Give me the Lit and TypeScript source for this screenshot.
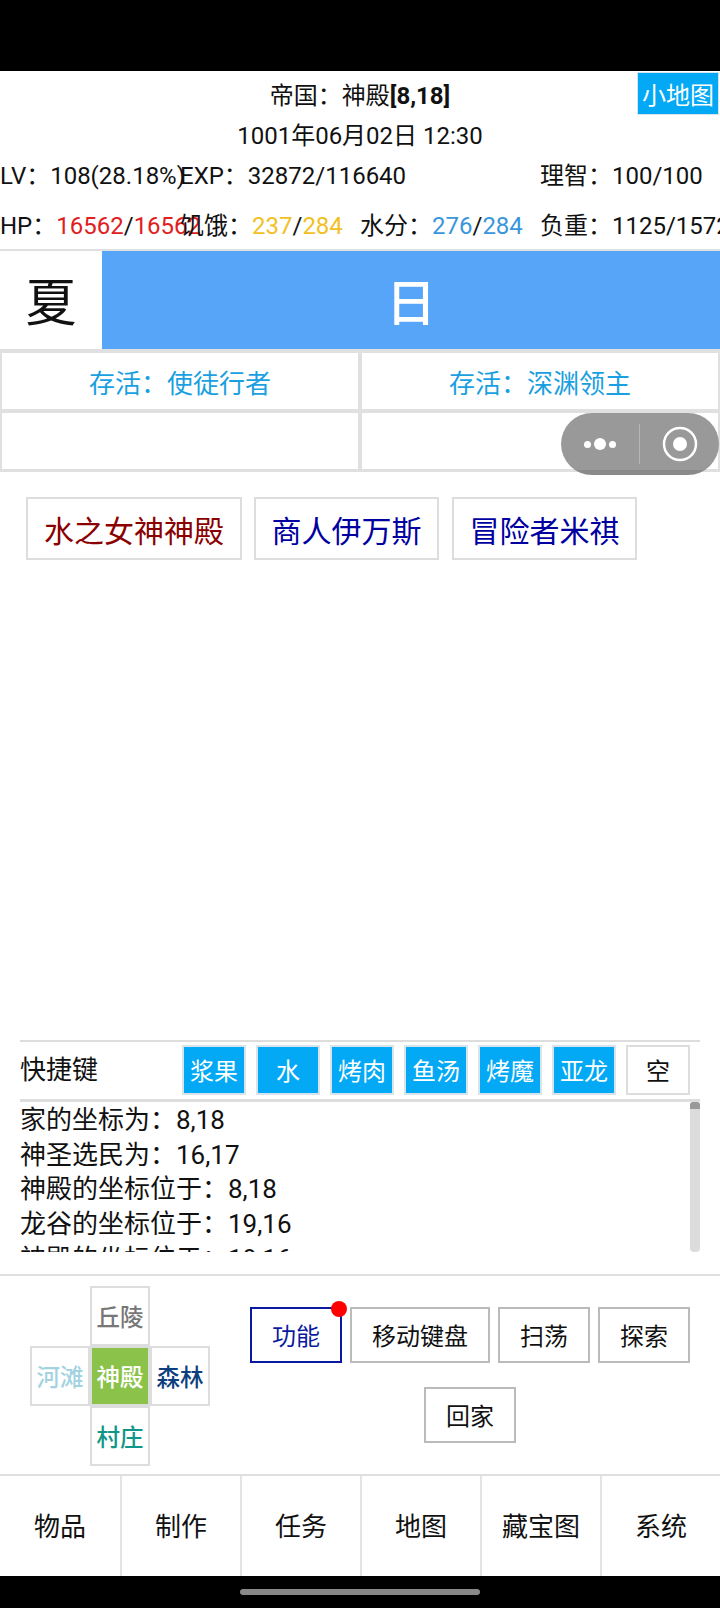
import { LitElement, html, css } from "lit";
import { customElement } from "lit/decorators.js";

@customElement("app-root")
export class AppRoot extends LitElement {
  static styles = css`
    :host {
      display: flex;
      flex-direction: column;
      width: 720px;
      height: 1608px;
      overflow: hidden;
      position: relative;
      background: #fff;
      color: #111;
      font-family: Roboto, "Noto Sans CJK SC", sans-serif;
      font-size: 24px;
    }
    .statusbar { height: 71px; background: #000; flex: none; }
    .head { height: 44px; flex: none; position: relative; display: flex; align-items: center; justify-content: center; }
    .mini {
      position: absolute; right: 1px; top: 1px; width: 82px; height: 43px;
      background: #03a9f4; color: #fff; border: 1px solid #d8e4ec; box-sizing: border-box;
      display: flex; align-items: center; justify-content: center; font-size: 24px;
    }
    .date { height: 33px; padding-top: 3px; line-height: 36px; flex: none; text-align: center; }
    .stats { flex: none; display: grid; grid-template-columns: repeat(4, 180px); grid-auto-rows: 50px; height: 98px; white-space: nowrap; line-height: 50px; }
    .span2 { grid-column: span 2; }
    .red { color: #e02020; }
    .yel { color: #f2c025; }
    .blu { color: #3a96dc; }
    .season { flex: none; height: 98px; display: flex; border-top: 2px solid #e0e0e0; }
    .season .s { width: 102px; box-sizing: border-box; padding-bottom: 3px; display: flex; align-items: center; justify-content: center; font-size: 51px; }
    .season .d { flex: 1; box-sizing: border-box; padding-bottom: 3px; background: #56a5f8; color: #fff; display: flex; align-items: center; justify-content: center; font-size: 50px; font-weight: 500; }
    .grid2 { flex: none; display: grid; grid-template-columns: 1fr 1fr; grid-auto-rows: 60px; background: #fff; border-top: 2px solid #e0e0e0; border-bottom: 1px solid #e0e0e0; }
    .grid2 > div {
      border: 2px solid #e0e0e0; box-sizing: border-box; display: flex; align-items: center; justify-content: center;
      color: #1a9fe0; font-size: 26px;
    }
    .npcs { flex: none; display: flex; gap: 12px; padding: 25px 0 0 26px; }
    .npc { height: 63px; border: 2px solid #ddd; box-sizing: border-box; display: flex; align-items: center; justify-content: center; font-size: 30px; }
    .n1 { width: 216px; color: #8b0000; }
    .n2 { width: 185px; color: #0000a0; }
    .n3 { margin-left: 1px; }
    .spacer { flex: 1; }
    .quick { flex: none; margin: 0 20px; border-top: 2px solid #ddd; border-bottom: 3px solid #ddd; height: 57px; display: flex; align-items: center; }
    .quick .lab { font-size: 26px; width: 162px; padding-bottom: 6px; box-sizing: border-box; }
    .keys { display: flex; gap: 10px; margin-bottom: 2px; }
    .key { width: 64px; height: 50px; box-sizing: border-box; border: 2px solid #d8e4ec; background: #03a9f4; color: #fff; display: flex; align-items: center; justify-content: center; font-size: 24px; }
    .key.empty { background: #fff; color: #111; border-color: #ddd; }
    .log { flex: none; height: 150px; box-sizing: border-box; margin: 0 20px; padding-top: 1px; position: relative; overflow: hidden; font-size: 26px; line-height: 34.7px; }
    .bar { position: absolute; right: 0; top: 0; width: 10px; height: 150px; background: #dcdcdc; border-radius: 4px; }
    .thumb { height: 7px; background: #999; border-radius: 3px 3px 0 0; }
    .sep { flex: none; height: 2px; background: #e0e0e0; margin-top: 22px; }
    .ctrl { flex: none; height: 198px; display: flex; }
    .map { width: 250px; flex: none; padding: 10px 0 0 30px; box-sizing: border-box; display: grid; grid-template-columns: repeat(3, 60px); grid-template-rows: repeat(3, 60px); }
    .map div { border: 2px solid #ddd; box-sizing: border-box; display: flex; align-items: center; justify-content: center; font-size: 23.5px; font-weight: 500; }
    .up { grid-column: 2; grid-row: 1; color: #777; }
    .lf { grid-column: 1; grid-row: 2; color: #a3d3e0; }
    .map .mid { grid-column: 2; grid-row: 2; color: #fff; background: #8bc34a; }
    .rt { grid-column: 3; grid-row: 2; color: #0d3f7e; }
    .dn { grid-column: 2; grid-row: 3; color: #0e9688; }
    .acts { flex: 1; display: flex; flex-wrap: wrap; justify-content: center; align-content: flex-start; gap: 24px 8px; padding: 31px 30px 0 0; box-sizing: border-box; }
    .act { position: relative; width: 92px; height: 56px; box-sizing: border-box; border: 2px solid #bbb; padding-bottom: 2px; display: flex; align-items: center; justify-content: center; font-size: 24px; }
    .act.wide { width: 140px; }
    .act.on { border-color: #0a1aa0; color: #0a1aa0; }
    .dot { position: absolute; right: -7px; top: -8px; width: 16px; height: 16px; border-radius: 50%; background: #f00; }
    .nav { flex: none; height: 102px; border-top: 2px solid #e0e0e0; box-sizing: border-box; display: grid; grid-template-columns: repeat(6, 1fr); }
    .nav div { border-left: 2px solid #e4e4e4; padding-bottom: 3px; display: flex; align-items: center; justify-content: center; font-size: 26px; }
    .nav div:first-child { border-left: 0; }
    .home { flex: none; height: 32px; background: #000; display: flex; align-items: center; justify-content: center; }
    .home i { display: block; width: 240px; height: 6px; border-radius: 3px; background: #888; }
    .capsule {
      position: absolute; left: 561px; top: 413px; width: 158px; height: 62px; border-radius: 31px; box-sizing: border-box;
      background: linear-gradient(#999 0, #999 57px, #8a8a8a 57px); display: flex; align-items: center;
    }
    .cap-l { width: 78px; display: flex; align-items: center; justify-content: center; gap: 3px; }
    .cap-l i { display: block; background: #fff; border-radius: 50%; width: 7px; height: 7px; }
    .cap-l i.big { width: 12px; height: 12px; }
    .cap-sep { width: 1px; height: 40px; background: #b5b5b5; }
    .cap-r { flex: 1; display: flex; align-items: center; justify-content: center; }
  `;

  render() {
    return html`
      <div class="statusbar"></div>
      <div class="head">
        <span>帝国：神殿<b>[8,18]</b></span>
        <div class="mini">小地图</div>
      </div>
      <div class="date">1001年06月02日 12:30</div>
      <div class="stats">
        <div>LV：108(28.18%)</div>
        <div class="span2">EXP：32872/116640</div>
        <div>理智：100/100</div>
        <div>HP：<span class="red">16562</span>/<span class="red">16562</span></div>
        <div>饥饿：<span class="yel">237</span>/<span class="yel">284</span></div>
        <div>水分：<span class="blu">276</span>/<span class="blu">284</span></div>
        <div>负重：1125/1572</div>
      </div>
      <div class="season"><div class="s">夏</div><div class="d">日</div></div>
      <div class="grid2">
        <div>存活：使徒行者</div><div>存活：深渊领主</div><div></div><div></div>
      </div>
      <div class="npcs">
        <div class="npc n1">水之女神神殿</div>
        <div class="npc n2">商人伊万斯</div>
        <div class="npc n2 n3">冒险者米祺</div>
      </div>
      <div class="spacer"></div>
      <div class="quick">
        <div class="lab">快捷键</div>
        <div class="keys">
          ${["浆果", "水", "烤肉", "鱼汤", "烤魔", "亚龙"].map((k) => html`<div class="key">${k}</div>`)}
          <div class="key empty">空</div>
        </div>
      </div>
      <div class="log">
        <div>家的坐标为：8,18</div>
        <div>神圣选民为：16,17</div>
        <div>神殿的坐标位于：8,18</div>
        <div>龙谷的坐标位于：19,16</div>
        <div>神殿的坐标位于：19,16</div>
        <div class="bar"><div class="thumb"></div></div>
      </div>
      <div class="sep"></div>
      <div class="ctrl">
        <div class="map">
          <div class="up">丘陵</div>
          <div class="lf">河滩</div>
          <div class="mid">神殿</div>
          <div class="rt">森林</div>
          <div class="dn">村庄</div>
        </div>
        <div class="acts">
          <div class="act on">功能<span class="dot"></span></div>
          <div class="act wide">移动键盘</div>
          <div class="act">扫荡</div>
          <div class="act">探索</div>
          <div class="act">回家</div>
        </div>
      </div>
      <div class="nav">
        ${["物品", "制作", "任务", "地图", "藏宝图", "系统"].map((k) => html`<div>${k}</div>`)}
      </div>
      <div class="home"><i></i></div>
      <div class="capsule">
        <div class="cap-l"><i></i><i class="big"></i><i></i></div>
        <div class="cap-sep"></div>
        <div class="cap-r">
          <svg width="36" height="36" viewBox="0 0 36 36"><circle cx="18" cy="18" r="16" fill="none" stroke="#fff" stroke-width="2.5"/><circle cx="18" cy="18" r="7" fill="#fff"/></svg>
        </div>
      </div>
    `;
  }
}
